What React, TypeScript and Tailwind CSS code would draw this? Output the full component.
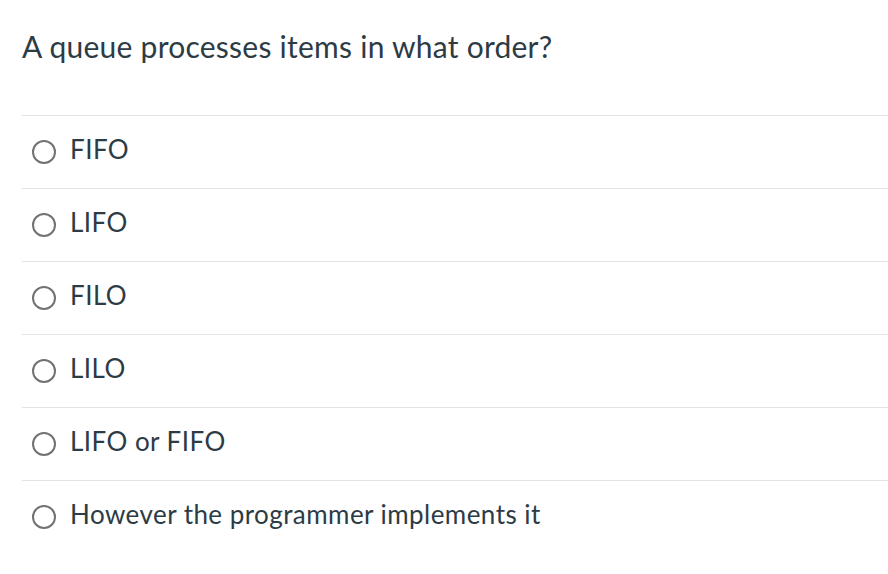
import React from "react";

const options = [
  "FIFO",
  "LIFO",
  "FILO",
  "LILO",
  "LIFO or FIFO",
  "However the programmer implements it",
];

export default function App() {
  return (
    <div className="min-h-screen bg-white pl-[22px] font-['Lato','Liberation_Sans',sans-serif] text-[#2d3b45]">
      <h1 className="pt-[28px] text-[30px] leading-[36px] font-normal tracking-[0.25px]">
        A queue processes items in what order?
      </h1>
      <div className="mt-[51px]">
        {options.map((o) => (
          <label
            key={o}
            className="flex h-[73px] items-center border-t border-[#e3e3e3] pl-[10px]"
          >
            <span className="box-border h-[24px] w-[24px] shrink-0 rounded-full border-2 border-[#727272] bg-white" />
            <span className="ml-[14px] pb-[6px] text-[26px] leading-[30px] tracking-[0.45px]">{o}</span>
          </label>
        ))}
      </div>
    </div>
  );
}
